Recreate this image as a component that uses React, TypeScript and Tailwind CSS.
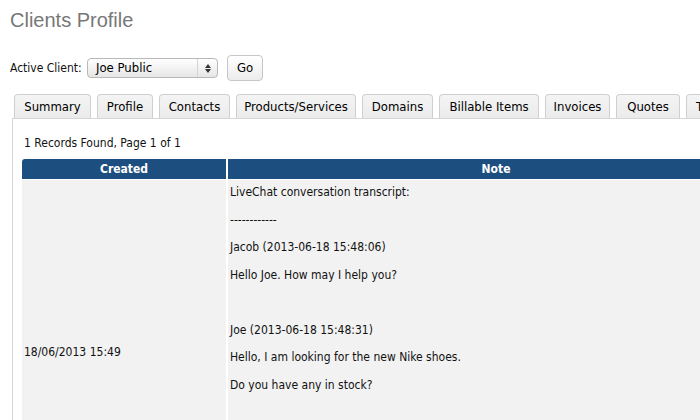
import React from "react";

const TABS = [
  { label: "Summary", w: "w-[77px]" },
  { label: "Profile", w: "w-[56px]" },
  { label: "Contacts", w: "w-[71px]" },
  { label: "Products/Services", w: "w-[120px]" },
  { label: "Domains", w: "w-[71px]" },
  { label: "Billable Items", w: "w-[100px]" },
  { label: "Invoices", w: "w-[65px]" },
  { label: "Quotes", w: "w-[64px]" },
  { label: "T", w: "w-[70px]" },
];

const NOTE_LINES = [
  "LiveChat conversation transcript:",
  "------------",
  "Jacob (2013-06-18 15:48:06)",
  "Hello Joe. How may I help you?",
  "",
  "Joe (2013-06-18 15:48:31)",
  "Hello, I am looking for the new Nike shoes.",
  "Do you have any in stock?",
];

export default function App() {
  return (
    <div className="w-[700px] h-[420px] overflow-hidden bg-white font-['Tahoma','DejaVu_Sans_Condensed','Liberation_Sans',sans-serif] text-[12px] text-[#111]">
      {/* Title */}
      <h1 className="pl-[10px] pt-[7px] text-[20px] leading-[26px] text-[#777] font-['Tahoma','Liberation_Sans',sans-serif]">
        Clients Profile
      </h1>

      {/* Client selector */}
      <div className="flex items-center pl-[10px] mt-[22px] h-[26px]">
        <span className="w-[77px]">Active Client:</span>
        <div className="relative flex items-center w-[131px] h-[20px] rounded-[4px] border border-[#b8b8b8] bg-gradient-to-b from-white to-[#e6e6e6] pl-[8px] text-[13px] text-black">
          Joe Public
          <div className="absolute right-0 top-0 h-full w-[20px] border-l border-[#d4d4d4] flex flex-col items-center justify-center gap-[1px]">
            <svg width="6" height="4" viewBox="0 0 6 4"><path d="M0 4 L3 0 L6 4 Z" fill="#333" /></svg>
            <svg width="6" height="4" viewBox="0 0 6 4"><path d="M0 0 L3 4 L6 0 Z" fill="#333" /></svg>
          </div>
        </div>
        <button className="ml-[9px] w-[36px] h-[26px] rounded-[4px] border border-[#c6c6c6] bg-gradient-to-b from-white to-[#ececec] text-[13px] text-black">
          Go
        </button>
      </div>

      {/* Tabs */}
      <div className="flex gap-[6px] pl-[14px] mt-[13px] h-[24px]">
        {TABS.map((t) => (
          <div
            key={t.label}
            className={`${t.w} shrink-0 h-[24px] flex items-center ${t.label === "T" ? "justify-start pl-[9px]" : "justify-center"} rounded-t-[4px] border border-b-0 border-[#cfcfcf] bg-gradient-to-b from-[#f4f4f4] to-[#ebebeb] text-[13px] text-black`}
          >
            {t.label}
          </div>
        ))}
      </div>

      {/* Panel */}
      <div className="ml-[12px] border-l border-t border-[#d6d6d6] pl-[9px] pt-[16px]">
        <p className="pl-[2px] leading-[17px]">1 Records Found, Page 1 of 1</p>

        <div className="mt-[7px] flex gap-[2px]">
          <div className="w-[204px] h-[20px] rounded-tl-[3px] bg-[#1d4e80] text-white font-bold flex items-center justify-center">
            Created
          </div>
          <div className="flex-1 h-[20px] bg-[#1d4e80] text-white font-bold flex items-center justify-center pl-[64px]">
            Note
          </div>
        </div>

        <div className="mt-px flex gap-[2px]">
          <div className="w-[204px] h-[344px] bg-[#f2f2f2] flex items-center pl-[2px]">
            18/06/2013 15:49
          </div>
          <div className="flex-1 h-[344px] bg-[#f2f2f2] pl-[2px] pt-[5px]">
            {NOTE_LINES.map((line, i) => (
              <p key={i} className="leading-[15.5px] h-[15.5px] mb-[12px] whitespace-nowrap">
                {line}
              </p>
            ))}
          </div>
        </div>
      </div>
    </div>
  );
}
